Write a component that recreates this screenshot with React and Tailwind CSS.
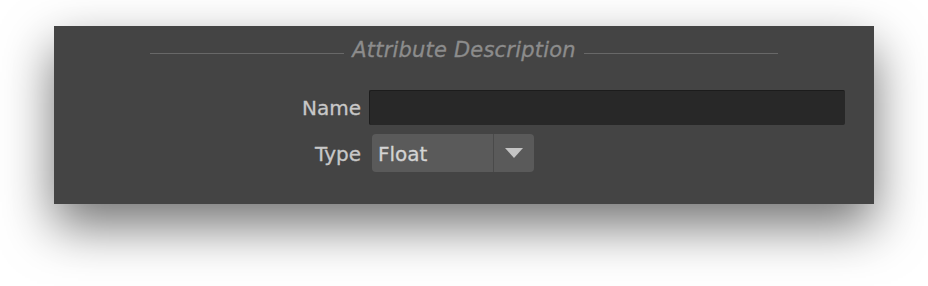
export default function App() {
  return (
    <div
      className="w-[928px] h-[286px] bg-white pt-[26px] pl-[54px] overflow-hidden"
      style={{ fontFamily: '"DejaVu Sans", "Open Sans", sans-serif' }}
    >
      <div className="w-[820px] h-[178px] bg-[#444444] shadow-[0_22px_48px_rgba(0,0,0,0.55)] flex flex-col">
        {/* Section header */}
        <div className="mt-[11px] h-[27px] px-[96px] flex items-center gap-[8px]">
          <div className="flex-1 h-px bg-[#686868] mt-[6px]" />
          <span className="text-[21px] leading-[27px] italic tracking-[0.2px] text-[#8c8c8c] [-webkit-text-stroke:0.3px_#8c8c8c]">
            Attribute Description
          </span>
          <div className="flex-1 h-px bg-[#686868] mt-[6px]" />
        </div>

        {/* Name */}
        <div className="mt-[26px] flex items-center">
          <label className="w-[307px] translate-y-[1px] text-right text-[20px] leading-[35px] text-[#c8c8c8] [-webkit-text-stroke:0.3px_#c8c8c8]">
            Name
          </label>
          <div className="ml-[8px] w-[476px] h-[35px] bg-[#282828] border-t border-l border-[#1c1c1c] rounded-[2px]" />
        </div>

        {/* Type */}
        <div className="mt-[9px] flex items-center">
          <label className="w-[307px] translate-y-[1px] text-right text-[20px] leading-[38px] text-[#c8c8c8] [-webkit-text-stroke:0.3px_#c8c8c8]">
            Type
          </label>
          <div className="ml-[11px] w-[162px] h-[38px] bg-[#5a5a5a] rounded-[4px] flex">
            <div className="w-[121px] pl-[6px] translate-y-[1px] text-[20px] leading-[38px] text-[#d4d4d4] [-webkit-text-stroke:0.3px_#d4d4d4]">
              Float
            </div>
            <div className="w-px bg-[#4a4a4a]" />
            <div className="flex-1 flex items-center justify-center">
              <svg width="18" height="10" viewBox="0 0 18 10">
                <path d="M0 0H18L9 10Z" fill="#c4c4c4" />
              </svg>
            </div>
          </div>
        </div>
      </div>
    </div>
  );
}
